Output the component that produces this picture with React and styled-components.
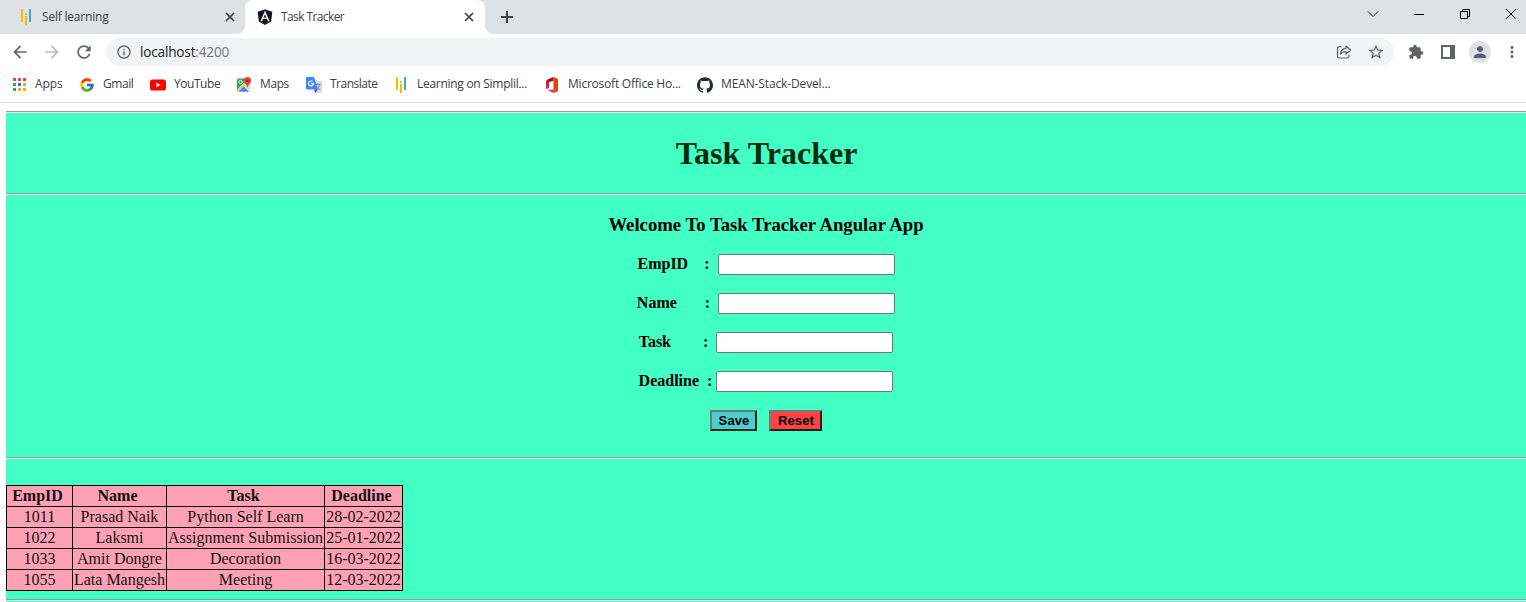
import React from "react";
import styled, { createGlobalStyle } from "styled-components";
import { FaAngular } from "react-icons/fa";
import { SiGithub } from "react-icons/si";
import { FcGoogle } from "react-icons/fc";
import { MdArrowBack, MdArrowForward, MdRefresh, MdExtension, MdStarBorder, MdPerson, MdInfoOutline, MdMoreVert } from "react-icons/md";

const Global = createGlobalStyle`
  * { box-sizing: border-box; }
  html, body { margin: 0; background: #fff; overflow: hidden; }
  svg { display: block; flex: none; }
`;

const Window = styled.div`
  width: 100%;
  height: 602px;
  overflow: hidden;
  display: flex;
  flex-direction: column;
  font-family: "Open Sans", "Noto Sans", sans-serif;
`;

const TabStrip = styled.div`
  display: flex;
  flex: none;
  height: 34px;
  background: #dee1e6;
`;

const Tab = styled.div`
  position: relative;
  display: flex;
  align-items: center;
  width: ${(p) => (p.$active ? 240 : 245)}px;
  padding: 0 ${(p) => (p.$active ? 10 : 9)}px 0 ${(p) => (p.$active ? 11 : 18)}px;
  border-radius: 8px 8px 0 0;
  background: ${(p) => (p.$active ? "#fff" : "transparent")};
`;

const Flare = styled.i`
  position: absolute;
  bottom: 0;
  ${(p) => p.$side}: -8px;
  width: 8px;
  height: 8px;
  background: radial-gradient(circle at ${(p) => (p.$side === "left" ? "0 0" : "100% 0")}, transparent 7.5px, #fff 8px);
`;

const TabTitle = styled.span`
  flex: 1;
  margin-left: ${(p) => p.$gap}px;
  font-size: 12px;
  letter-spacing: ${(p) => p.$ls}px;
  color: #3c4043;
  line-height: 16px;
`;

const NewTab = styled.div`
  display: flex;
  align-items: center;
  padding-left: 15px;
  flex: 1;
`;

const Caption = styled.div`
  display: flex;
  justify-content: center;
  width: 46px;
  padding-top: 6px;
  &:last-child { margin-right: -8px; }
`;

const Toolbar = styled.div`
  display: flex;
  flex: none;
  align-items: center;
  height: 36px;
  padding-left: 4px;
`;

const ToolButton = styled.div`
  display: flex;
  flex: none;
  align-items: center;
  justify-content: center;
  width: 32px;
  height: 28px;
  color: ${(p) => (p.$dim ? "#babcbe" : "#5f6368")};
`;

const Address = styled.div`
  display: flex;
  flex: none;
  align-items: center;
  width: 1288px;
  height: 28px;
  margin: 0 6px;
  padding: 0 2px 0 10px;
  border-radius: 14px;
  background: #f1f3f4;
  color: #5f6368;
`;

const Url = styled.div`
  flex: 1;
  margin-left: 8px;
  font-size: 13.6px;
  letter-spacing: -0.18px;
  line-height: 20px;
  color: #70757a;
  b { font-weight: 400; color: #202124; }
`;

const Avatar = styled.div`
  display: flex;
  align-items: center;
  justify-content: center;
  width: 22px;
  height: 22px;
  border-radius: 50%;
  background: #dee1e6;
  color: #50607a;
`;

const Bookmarks = styled.div`
  display: flex;
  flex: none;
  align-items: center;
  height: 33px;
  padding-bottom: 3px;
  padding-left: 11px;
  border-bottom: 1px solid #dadce0;
`;

const Bookmark = styled.div`
  display: flex;
  align-items: center;
  width: ${(p) => p.$w}px;
  flex: none;
`;

const BookmarkLabel = styled.span`
  margin-left: 8px;
  padding-bottom: 2px;
  font-size: 12px;
  line-height: 16px;
  letter-spacing: ${(p) => p.$ls}px;
  color: #3c4043;
  white-space: nowrap;
`;

const Page = styled.main`
  flex: 1;
  margin: 8px 0 0 6px;
  background: #42ffc3;
  font-family: "Liberation Serif", "Times New Roman", serif;
  font-size: 16px;
  color: #000;
  text-align: center;
`;

const Rule = styled.div`
  height: 2px;
  border-top: 1px solid #9a9a9a;
  border-bottom: 1px solid #eee;
`;

const Title = styled.h1`
  margin: 0;
  padding-left: 1px;
  height: 80px;
  line-height: 80px;
  font-size: 32px;
  color: #002b11;
`;

const Welcome = styled.h3`
  margin: 0;
  padding-top: 19px;
  height: 59px;
  font-size: 18.72px;
  line-height: 22px;
`;

const Field = styled.label`
  display: flex;
  justify-content: center;
  align-items: flex-start;
  height: 21px;
  margin-bottom: 18px;
  font-weight: 700;
  line-height: 19px;
  white-space: pre;
`;

const Input = styled.input`
  width: 177px;
  height: 21px;
  padding: 1px 2px;
  border: 1px solid #767676;
  border-radius: 2px;
  background: #fff;
`;

const Actions = styled.div`
  display: flex;
  justify-content: center;
  gap: 12px;
  height: 47px;
`;

const Button = styled.button`
  width: ${(p) => p.$w}px;
  height: 21px;
  padding: 0 0 0 1px;
  border: 2px solid;
  border-color: #767676 #212121 #212121 #767676;
  background: ${(p) => p.$bg};
  font: 700 13px/15px "Liberation Sans", Arial, sans-serif;
  letter-spacing: 0.1px;
  color: #000;
`;

const Table = styled.table`
  table-layout: fixed;
  width: 397px;
  margin: 26px 0 8px;
  border-collapse: collapse;
  background: #ffa1b5;
  color: #111;
  th, td {
    height: 21px;
    padding: 0;
    border: 1px solid #000;
    font-size: 16px;
    line-height: 20px;
    text-align: center;
    white-space: pre;
  }
`;

const Simpli = () => (
  <svg width="16" height="16" viewBox="0 0 16 16">
    <path d="M3 0h2v13H3z M7 7h2v9H7z M7 4h2v2H7z" fill="#fbbc05" />
    <path d="M11 0h2v13h-2z" fill="#3ea6df" />
  </svg>
);

const Close = () => (
  <svg width="12" height="12" viewBox="0 0 12 12">
    <path d="M2 2l8 8M10 2l-8 8" stroke="#3c4043" strokeWidth="1.7" />
  </svg>
);

const Apps = () => (
  <svg width="16" height="16" viewBox="0 0 16 16">
    <path d="M2 1h3v3H2zM7 1h3v3H7zM12 1h3v3h-3z" fill="#ea4335" />
    <path d="M2 6h3v3H2zM2 11h3v3H2z" fill="#34a853" />
    <path d="M7 6h3v3H7z" fill="#1a73e8" />
    <path d="M12 6h3v3h-3zM7 11h3v3H7zM12 11h3v3h-3z" fill="#fba60a" />
  </svg>
);

const YouTube = () => (
  <svg width="16" height="16" viewBox="0 0 16 16">
    <rect y="2.4" width="16" height="11.2" rx="2.6" fill="#f00" />
    <path d="M6.3 5.6v4.8L10.6 8z" fill="#fff" />
  </svg>
);

const Maps = () => (
  <svg width="16" height="16" viewBox="0 0 16 16">
    <rect x="1" y="1.5" width="13" height="13" rx="1.5" fill="#34a061" />
    <path d="M1 13L12.5 2 14 3.5v10L13 14.5H2z" fill="#d6d8dc" />
    <path d="M2.5 14.5l5.3-5.2 5 5.2z" fill="#4285f4" />
    <path d="M1 12.7L11.8 2l1.2 1L2 14.2z" fill="#fbd04a" />
    <path d="M8 8.7l5.8 5.8" stroke="#fff" />
    <circle cx="4.5" cy="5" r="1.7" fill="none" stroke="#d8f0df" />
    <path d="M11.5 0a3.7 3.7 0 0 0-3.7 3.7c0 2.7 3 3.5 3.7 7 .7-3.5 3.7-4.3 3.7-7A3.7 3.7 0 0 0 11.5 0z" fill="#ea4335" />
    <circle cx="11.5" cy="3.7" r="1.3" fill="#8c2620" />
  </svg>
);

const Translate = () => (
  <svg width="16" height="16" viewBox="0 0 16 16">
    <path d="M6 4h9a1 1 0 0 1 1 1v10a1 1 0 0 1-1 1H9z" fill="#d5d8dc" />
    <path d="M9 7.5h5.5M12 6.3v1.2M10 12.5c2-1 3-2.7 3.3-5M10.3 9c.8 1.7 2 2.7 3.7 3.5" fill="none" stroke="#74838d" />
    <path d="M1 0h7l4 12.5H1a1 1 0 0 1-1-1V1a1 1 0 0 1 1-1z" fill="#4285f4" />
    <path d="M8.3 12.5h3.5L9 16z" fill="#3059b8" />
    <path d="M6.7 4.7a2.5 2.5 0 1 0 .7 2H5" fill="none" stroke="#fff" strokeWidth="1.1" />
  </svg>
);

const Office = () => (
  <svg width="16" height="16" viewBox="0 0 16 16">
    <defs>
      <linearGradient id="office" x1="0" y1="1" x2=".6" y2="0">
        <stop stopColor="#e8336d" />
        <stop offset=".6" stopColor="#b7152c" />
        <stop offset="1" stopColor="#8e1110" />
      </linearGradient>
    </defs>
    <path d="M9.5 0L4 2.2Q2 3 2 5v6q0 1.3 1 1l2-1V5.2l4.5-1.4z" fill="url(#office)" />
    <path d="M9.5 0L13 1.2q1 .4 1 1.5v10.6q0 1.1-1 1.5L9.5 16z" fill="#e0450f" />
    <path d="M3.5 12.7h6V16z" fill="#e3264c" />
  </svg>
);

const Share = () => (
  <svg width="16" height="16" viewBox="0 0 16 16" fill="none" stroke="#5f6368" strokeWidth="1.2">
    <path d="M5.5 2.6H3.3a1.8 1.8 0 0 0-1.8 1.8v7.8A1.8 1.8 0 0 0 3.3 14h7.9a1.8 1.8 0 0 0 1.8-1.8v-1.5" />
    <path d="M10 2l4.5 4L10 10V7.7Q6.5 7.6 4.3 10 5 4.7 10 4.3z" strokeLinejoin="round" />
  </svg>
);

const bookmarks = [
  ["Apps", <Apps />, 68, -0.1],
  ["Gmail", <FcGoogle size={16} />, 71, -0.45],
  ["YouTube", <YouTube />, 86, -0.45],
  ["Maps", <Maps />, 70, -0.4],
  ["Translate", <Translate />, 87, -0.5],
  ["Learning on Simplil...", <Simpli />, 151, -0.28],
  ["Microsoft Office Ho...", <Office />, 153, -0.22],
  ["MEAN-Stack-Devel...", <SiGithub size={16} color="#24292f" />, 140, -0.13],
];

const fields = ["EmpID    :  ", "Name       :  ", "Task        :  ", "Deadline  : "];

const rows = [
  ["1011", "Prasad Naik", "Python Self Learn", "28-02-2022"],
  ["1022", "Laksmi", "Assignment Submission", "25-01-2022"],
  ["1033", "Amit Dongre", "Decoration", "16-03-2022"],
  ["1055", "Lata Mangesh", "Meeting", "12-03-2022"],
];

export default function App() {
  return (
    <Window>
      <Global />
      <TabStrip>
        <Tab>
          <Simpli />
          <TabTitle $gap={8} $ls={-0.2}>Self learning</TabTitle>
          <Close />
        </Tab>
        <Tab $active>
          <Flare $side="left" />
          <FaAngular size={18} color="#12161f" />
          <TabTitle $gap={7} $ls={-0.6}>Task Tracker</TabTitle>
          <Close />
          <Flare $side="right" />
        </Tab>
        <NewTab>
          <svg width="14" height="14" viewBox="0 0 14 14">
            <path d="M7 1v12M1 7h12" stroke="#3c4043" strokeWidth="2" />
          </svg>
        </NewTab>
        <Caption>
          <svg width="16" height="16" viewBox="0 0 16 16" fill="none" stroke="#222">
            <path d="M3 5.5l5 5 5-5" />
          </svg>
        </Caption>
        <Caption>
          <svg width="16" height="16" viewBox="0 0 16 16" stroke="#000">
            <path d="M3 8.5h10" />
          </svg>
        </Caption>
        <Caption>
          <svg width="16" height="16" viewBox="0 0 16 16" fill="none" stroke="#000">
            <path d="M3.5 5.5h7v7h-7zM5.5 5.5v-2h7v7h-2" />
          </svg>
        </Caption>
        <Caption>
          <svg width="16" height="16" viewBox="0 0 16 16" stroke="#000">
            <path d="M3 3l10 10M13 3L3 13" />
          </svg>
        </Caption>
      </TabStrip>
      <Toolbar>
        <ToolButton><MdArrowBack size={20} /></ToolButton>
        <ToolButton $dim><MdArrowForward size={20} /></ToolButton>
        <ToolButton><MdRefresh size={20} /></ToolButton>
        <Address>
          <MdInfoOutline size={16} />
          <Url><b>localhost</b>:4200</Url>
          <ToolButton><Share /></ToolButton>
          <ToolButton><MdStarBorder size={18} /></ToolButton>
        </Address>
        <ToolButton><MdExtension size={16} /></ToolButton>
        <ToolButton>
          <svg width="14" height="14" viewBox="0 0 14 14">
            <path d="M0 0h14v14H0zM2 2v10h7V2z" fill="#5f6368" fillRule="evenodd" />
          </svg>
        </ToolButton>
        <ToolButton><Avatar><MdPerson size={18} /></Avatar></ToolButton>
        <ToolButton><MdMoreVert size={18} /></ToolButton>
      </Toolbar>
      <Bookmarks>
        {bookmarks.map(([name, icon, w, ls], i) => (
          <Bookmark key={name} $w={w}>
            {icon}
            <BookmarkLabel $ls={ls}>{name}</BookmarkLabel>
          </Bookmark>
        ))}
      </Bookmarks>
      <Page>
        <Rule />
        <Title>Task Tracker</Title>
        <Rule />
        <Welcome>Welcome To Task Tracker Angular App</Welcome>
        {fields.map((f) => (
          <Field key={f}>{f}<Input /></Field>
        ))}
        <Actions>
          <Button $w={47} $bg="#48d1cc">Save</Button>
          <Button $w={53} $bg="#ff4343">Reset</Button>
        </Actions>
        <Rule />
        <Table>
          <colgroup>
            <col style={{ width: 66 }} />
            <col style={{ width: 94 }} />
            <col style={{ width: 158 }} />
            <col />
          </colgroup>
          <thead>
            <tr>{["EmpID", "Name", "Task", "Deadline"].map((h) => <th key={h}>{h + "\u00a0"}</th>)}</tr>
          </thead>
          <tbody>
            {rows.map((r) => (
              <tr key={r[0]}>{r.map((c) => <td key={c}>{c}</td>)}</tr>
            ))}
          </tbody>
        </Table>
        <Rule />
      </Page>
    </Window>
  );
}
